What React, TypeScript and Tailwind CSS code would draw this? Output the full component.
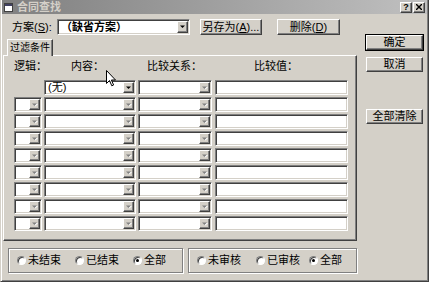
import React from 'react';

const font = { fontFamily: '"Liberation Sans", "Noto Sans CJK SC", sans-serif' };

// classic win2000 bevels
const raised =
  'border border-t-white border-l-white border-r-[#404040] border-b-[#404040] shadow-[inset_-1px_-1px_0_#808080,inset_1px_1px_0_#d4d0c8]';
const sunken =
  'border border-t-[#808080] border-l-[#808080] border-r-white border-b-white shadow-[inset_1px_1px_0_#404040,inset_-1px_-1px_0_#d4d0c8]';

function DropBtn({ on }: { on?: boolean }) {
  return (
    <div className={`${raised} w-[11px] h-full flex items-center justify-center bg-[#d4d0c8] shrink-0`}>
      <svg width="6" height="4" viewBox="0 0 6 4">
        {!on && <path d="M1 1h5L3.5 3.5z" fill="#fff" />}
        <path d="M0 0.5h5L2.5 3z" fill={on ? '#000' : '#808080'} />
      </svg>
    </div>
  );
}

function Combo({ cls, text, on, bold }: { cls: string; text?: string; on?: boolean; bold?: boolean }) {
  return (
    <div className={`${sunken} ${cls} bg-white flex items-stretch p-[1px]`}>
      <span
        className={`flex-1 flex items-center text-[11px] leading-none pl-[2px] overflow-hidden whitespace-nowrap ${bold ? 'font-bold' : ''}`}
      >
        {text}
      </span>
      <DropBtn on={on} />
    </div>
  );
}

function Btn({ cls, children, def }: { cls: string; children: React.ReactNode; def?: boolean }) {
  return (
    <div className={`${def ? 'outline outline-1 outline-black' : ''} ${cls}`}>
      <div
        className={`${raised} h-full flex items-center justify-center text-[11px] leading-none whitespace-nowrap bg-[#d4d0c8]`}
      >
        {children}
      </div>
    </div>
  );
}

function Radio({ label, on, cls }: { label: string; on?: boolean; cls: string }) {
  return (
    <div className={`flex items-center ${cls}`}>
      <div className="w-[9px] h-[9px] rounded-full bg-white border border-t-[#808080] border-l-[#808080] border-r-white border-b-white shadow-[inset_1px_1px_0_#404040] flex items-center justify-center">
        {on && <div className="w-[3px] h-[3px] rounded-full bg-black" />}
      </div>
      <span className="ml-[2px] text-[11px] leading-none whitespace-nowrap">{label}</span>
    </div>
  );
}

export default function App() {
  const rows = [0, 1, 2, 3, 4, 5, 6, 7, 8];
  return (
    <div
      style={font}
      className="relative w-[429px] h-[282px] overflow-hidden bg-[#d4d0c8] text-black border-l border-r border-b border-l-[#d4d0c8] border-r-[#404040] border-b-[#404040] shadow-[inset_1px_0_0_white,inset_-1px_-1px_0_#808080] pl-[1px]"
    >
      {/* Title bar */}
      <div className="h-[14px] w-[425px] flex items-center bg-gradient-to-r from-[#808080] to-[#c0c0c0]">
        <svg width="9" height="9" viewBox="0 0 9 9" className="ml-[2px]">
          <rect x="0.5" y="0.5" width="8" height="8" fill="#fff" stroke="#404040" />
          <rect x="1" y="1" width="7" height="2" fill="#404060" />
        </svg>
        <span className="ml-[4px] text-[11px] font-bold leading-none text-[#d4d0c8] whitespace-nowrap">合同查找</span>
        <div className="ml-auto flex mr-[2px]">
          <div className={`${raised} w-[12px] h-[11px] flex items-center justify-center text-[9px] font-bold leading-none bg-[#d4d0c8]`}>?</div>
          <div className={`${raised} w-[12px] h-[11px] ml-[1px] flex items-center justify-center bg-[#d4d0c8]`}>
            <svg width="6" height="6" viewBox="0 0 6 6"><path d="M0 0l6 6M6 0l-6 6" stroke="#000" strokeWidth="1.4" /></svg>
          </div>
        </div>
      </div>

      {/* Body */}
      <div className="flex">
        {/* Left column */}
        <div className="ml-[1px] w-[354px] flex flex-col">
          {/* Scheme row */}
          <div className="mt-[5px] h-[16px] flex items-center">
            <span className="ml-[9px] w-[45px] text-[11px] leading-none whitespace-nowrap">
              方案(<span className="underline">S</span>):
            </span>
            <Combo cls="w-[133px] h-[16px]" text="（缺省方案）" on bold />
            <Btn cls="ml-[10px] w-[62px] h-[16px]">
              另存为(<span className="underline">A</span>)...
            </Btn>
            <Btn cls="ml-[15px] w-[63px] h-[16px]">
              删除(<span className="underline">D</span>)
            </Btn>
          </div>

          {/* Tab */}
          <div className="mt-[4px] h-[17px] flex relative z-10 -mb-[1px]">
            <div className="ml-[4px] w-[46px] h-full bg-[#d4d0c8] border-t border-l border-r border-t-white border-l-white border-r-[#404040] shadow-[inset_-1px_0_0_#808080] flex items-center justify-center text-[10px] leading-none whitespace-nowrap">
              过滤条件
            </div>
          </div>

          {/* Panel */}
          <div className={`${raised} h-[186px] w-[354px] bg-[#d4d0c8] flex flex-col pl-[10px]`}>
            <div className="mt-[4px] h-[12px] flex text-[11px] leading-[12px] whitespace-nowrap">
              <span className="w-[57px]">逻辑：</span>
              <span className="w-[76px]">内容：</span>
              <span className="w-[107px]">比较关系：</span>
              <span>比较值：</span>
            </div>
            <div className="mt-[8px] flex flex-col gap-[2px]">
              {rows.map((r) => (
                <div key={r} className="flex h-[15px]">
                  {r === 0 ? <div className="w-[28px]" /> : <Combo cls="w-[28px] h-[15px]" />}
                  <Combo cls="ml-[2px] w-[92px] h-[15px]" text={r === 0 ? '(无)' : ''} on={r === 0} />
                  <Combo cls="ml-[2px] w-[74px] h-[15px]" />
                  <div className={`${sunken} ml-[3px] w-[133px] h-[15px] bg-white`} />
                </div>
              ))}
            </div>
          </div>

          {/* Radio groups */}
          <div className="mt-[7px] flex">
            <div className="ml-[5px] w-[175px] h-[25px] border border-[#808080] shadow-[inset_1px_1px_0_white,1px_1px_0_white] flex items-center pl-[8px]">
              <Radio cls="w-[58px]" label="未结束" />
              <Radio cls="w-[58px]" label="已结束" />
              <Radio cls="" label="全部" on />
            </div>
            <div className="ml-[5px] w-[169px] h-[25px] border border-[#808080] shadow-[inset_1px_1px_0_white,1px_1px_0_white] flex items-center pl-[8px]">
              <Radio cls="w-[59px]" label="未审核" />
              <Radio cls="w-[53px]" label="已审核" />
              <Radio cls="" label="全部" on />
            </div>
          </div>
        </div>

        {/* Right buttons */}
        <div className="ml-[9px] w-[57px] pt-[21px] flex flex-col">
          <Btn cls="h-[15px]" def>确定</Btn>
          <Btn cls="mt-[7px] h-[15px]">取消</Btn>
          <Btn cls="mt-[37px] h-[15px]">全部清除</Btn>
        </div>
      </div>

      {/* mouse cursor */}
      <svg className="absolute left-[105px] top-[70px]" width="11" height="17" viewBox="0 0 11 17">
        <path d="M0.5 0.5V13.5L3.5 10.5L5.8 15.8L7.6 15L5.4 10H9.5Z" fill="#fff" stroke="#000" strokeWidth="1" strokeLinejoin="round" />
      </svg>
    </div>
  );
}
